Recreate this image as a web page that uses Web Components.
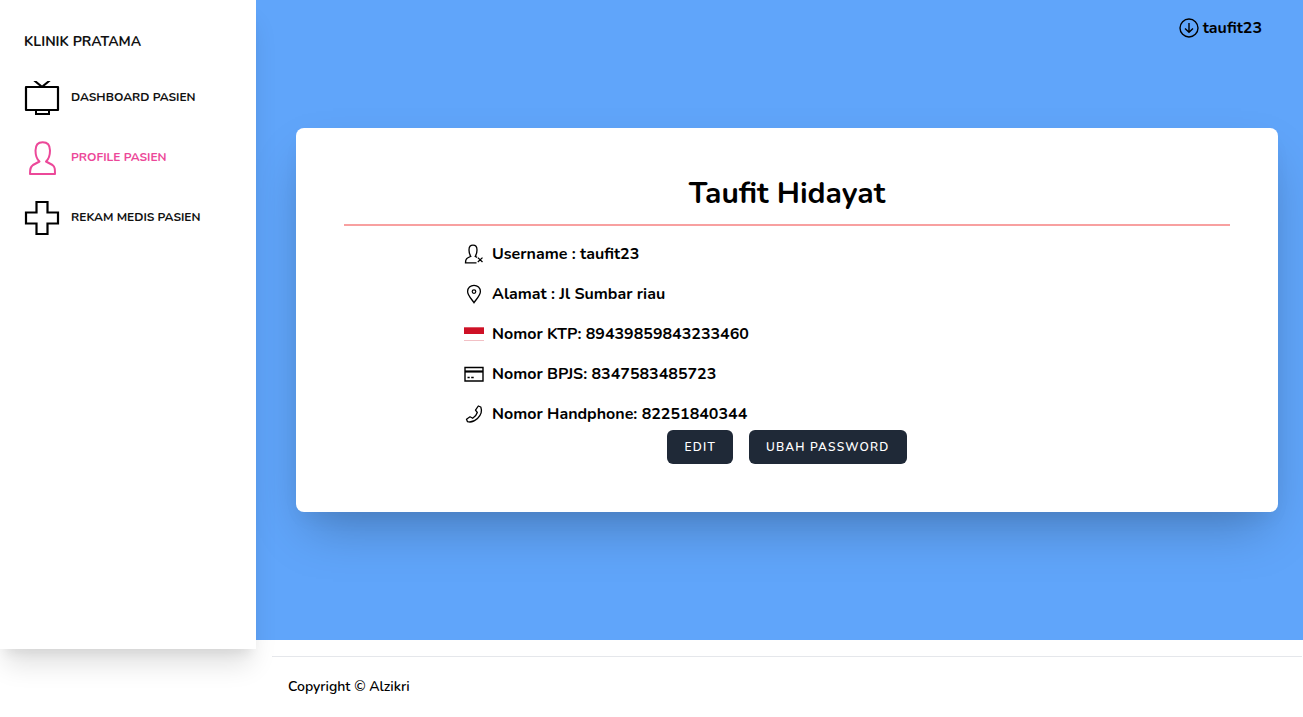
<!DOCTYPE html>
<html lang="id">
<head>
<meta charset="utf-8">
<title>Klinik Pratama</title>
<style>
  body { margin: 0; background: #fff; color: #000; font-family: Nunito, Lato, "Open Sans", sans-serif; font-size: 16px; line-height: 24px; }
</style>
</head>
<body>
<clinic-app></clinic-app>
<script>
const define = (name, html, setup) => customElements.define(name, class extends HTMLElement {
  connectedCallback() {
    if (this.shadowRoot) return;
    this.attachShadow({ mode: 'open' }).innerHTML = html;
    if (setup) setup(this, this.shadowRoot);
  }
});

const icons = {
  tv: ['0 0 36 36', '<path d="M2 7H34V30H2Z" stroke-width="2.200" stroke-linejoin="round"/><path d="M12 30V34H25V30" stroke-width="2"/><path d="M9.300 1H12.500L18 5.600L23.500 1H26.700L19.500 7H16.500Z" fill="currentColor" stroke="none"/>'],
  user: ['0 0 36 36', '<path d="M15.500 21.500C12 18.500 11.500 14.500 11.500 10.500C11.500 5 14 2.200 18.700 2.200S26 5 26 10.500C26 14.500 25.500 18.500 22 21.500L28.500 25C31 27 31 29 31 34H6C6 29 6.300 27 9 25L15.500 21.500Z" stroke-width="2" stroke-linejoin="round"/>'],
  cross: ['0 0 36 36', '<path d="M12.500 2H23.500V12.500H34V23.500H23.500V34H12.500V23.500H2V12.500H12.500Z" stroke-width="2.200"/>'],
  down: ['0 0 20 20', '<circle cx="10" cy="10" r="9" stroke-width="1.400"/><path d="M10 5V14.300M6 10.500L10 14.300L14 10.500" stroke-width="1.400"/>'],
  userx: ['0 0 20 20', '<path d="M12.500 18.800H1.500C1.500 16 1.500 15 3.500 14L6.800 12.300C5.300 10.500 5 9 5 6C5 3 6.300 1.200 9 1.200S13 3 13 6C13 9 12.700 10.500 11.200 12.300L13 13.400M13.800 13.600L18.500 18M18.500 13.600L13.800 18" stroke-width="1.300"/>'],
  pin: ['0 0 20 20', '<path d="M10 18.700C8 15.500 3.600 11.500 3.600 7.500C3.600 4 6.500 1.300 10 1.300S16.400 4 16.400 7.500C16.400 11.500 12 15.500 10 18.700Z" stroke-width="1.300"/><circle cx="10" cy="7.600" r="1.800" stroke-width="1.200"/>'],
  flag: ['0 0 20 20', '<path d="M0 3.300H20V10H0Z" fill="#ce1126" stroke="none"/><path d="M0 16.500H20" stroke="#f2c0c5" stroke-width="1"/>'],
  card: ['0 0 20 20', '<path d="M1 3.500H19V17H1Z" stroke-width="1.400"/><path d="M1 7.500H19" stroke-width="2.200"/><path d="M3.500 13.500H5.700M7.200 13.500H9.700" stroke-width="1.400"/>'],
  phone: ['0 0 20 20', '<path d="M14.300 2L16.800 3C18.300 7 16.800 11.300 13.500 14.500C10.300 17.500 6.500 18.500 3.500 17.700L2.500 15.200L6 12.800L8.700 14.300C10.800 13 12.500 11 13.300 8.500L11.500 6.200Z" stroke-width="1.300" stroke-linejoin="round"/>']
};

define('line-icon', `<style>
  :host { display: block; flex: none; width: 20px; height: 20px; }
  svg { display: block; width: 100%; height: 100%; fill: none; stroke: currentColor; }
</style><svg aria-hidden="true"></svg>`, (host, root) => {
  const [box, body] = icons[host.getAttribute('name')];
  const svg = root.querySelector('svg');
  svg.setAttribute('viewBox', box);
  svg.innerHTML = body;
});

define('nav-item', `<style>
  :host { display: block; color: #111; }
  :host([active]) { color: #ec4899; }
  a { display: flex; align-items: center; gap: 11px; color: inherit; text-decoration: none; font-size: 12px; font-weight: 700; line-height: 16px; text-transform: uppercase; }
  span { padding-bottom: 2px; }
  line-icon { width: 36px; height: 36px; }
  :host(:not([active])) line-icon { color: #000; }
</style><a href="#"><span><slot></slot></span></a>`, (host, root) => {
  const icon = document.createElement('line-icon');
  icon.setAttribute('name', host.getAttribute('icon'));
  root.querySelector('a').prepend(icon);
});

define('side-bar', `<style>
  :host { display: block; box-sizing: border-box; width: 256px; height: calc(100vh - 68px); padding: 32px 24px; background: #fff; box-shadow: 0 20px 25px -5px rgba(0,0,0,.12), 0 10px 10px -5px rgba(0,0,0,.06); }
  .brand { display: block; color: #111; text-decoration: none; font-size: 14px; font-weight: 700; line-height: 20px; margin-bottom: 28px; }
  nav { display: flex; flex-direction: column; gap: 24px; }
</style>
<a class="brand" href="#">KLINIK PRATAMA</a>
<nav>
  <nav-item icon="tv">Dashboard Pasien</nav-item>
  <nav-item icon="user" active>Profile Pasien</nav-item>
  <nav-item icon="cross">Rekam Medis Pasien</nav-item>
</nav>`);

define('user-menu', `<style>
  :host { display: flex; justify-content: flex-end; padding: 16px 41px 0 0; }
  button { display: flex; align-items: center; gap: 4px; padding: 0; border: 0; background: none; color: #000; font: inherit; font-weight: 700; cursor: pointer; }
</style><button type="button"><line-icon name="down"></line-icon><slot></slot></button>`);

define('info-row', `<style>
  :host { display: flex; align-items: center; gap: 8px; font-weight: 700; }
</style><slot name="icon"></slot><span><slot></slot></span>`);

define('dark-button', `<style>
  :host { display: block; }
  button { height: 34px; padding: 0 17px; border: 0; border-radius: 6px; background: #1f2937; color: #fff; font: inherit; font-size: 12px; font-weight: 600; line-height: 16px; letter-spacing: 0.1em; text-transform: uppercase; cursor: pointer; }
</style><button type="button"><slot></slot></button>`);

define('profile-card', `<style>
  :host { display: block; padding: 48px; border-radius: 8px; background: #fff; box-shadow: 0 25px 50px -12px rgba(0,0,0,.25), 0 10px 20px -5px rgba(0,0,0,.05); }
  h1 { margin: 0; padding-bottom: 12px; border-bottom: 2px solid #f8a0a0; text-align: center; font-size: 30px; font-weight: 700; line-height: 36px; }
  .rows { display: flex; flex-direction: column; gap: 16px; padding: 16px 120px 4px; }
  .actions { display: flex; justify-content: center; gap: 16px; }
</style>
<h1>Taufit Hidayat</h1>
<div class="rows">
  <info-row><line-icon slot="icon" name="userx"></line-icon>Username : taufit23</info-row>
  <info-row><line-icon slot="icon" name="pin"></line-icon>Alamat : Jl Sumbar riau</info-row>
  <info-row><line-icon slot="icon" name="flag"></line-icon>Nomor KTP: 89439859843233460</info-row>
  <info-row><line-icon slot="icon" name="card"></line-icon>Nomor BPJS: 8347583485723</info-row>
  <info-row><line-icon slot="icon" name="phone"></line-icon>Nomor Handphone: 82251840344</info-row>
</div>
<div class="actions"><dark-button>Edit</dark-button><dark-button>Ubah Password</dark-button></div>`);

define('page-footer', `<style>
  :host { display: block; padding: 16px 1px 16px 16px; }
  div { border-top: 1px solid #e5e7eb; padding: 20px 16px 0; font-size: 14px; font-weight: 600; line-height: 20px; }
</style><div><slot></slot></div>`);

define('clinic-app', `<style>
  :host { display: grid; grid-template-columns: 256px minmax(0, 1fr); }
  side-bar { position: relative; z-index: 1; }
  .stage { background: #60a5fa; padding-bottom: 128px; }
  profile-card { margin: 88px 25px 0 40px; }
</style>
<side-bar></side-bar>
<main>
  <div class="stage"><user-menu>taufit23</user-menu><profile-card></profile-card></div>
  <page-footer>Copyright © Alzikri</page-footer>
</main>`);
</script>
</body>
</html>
